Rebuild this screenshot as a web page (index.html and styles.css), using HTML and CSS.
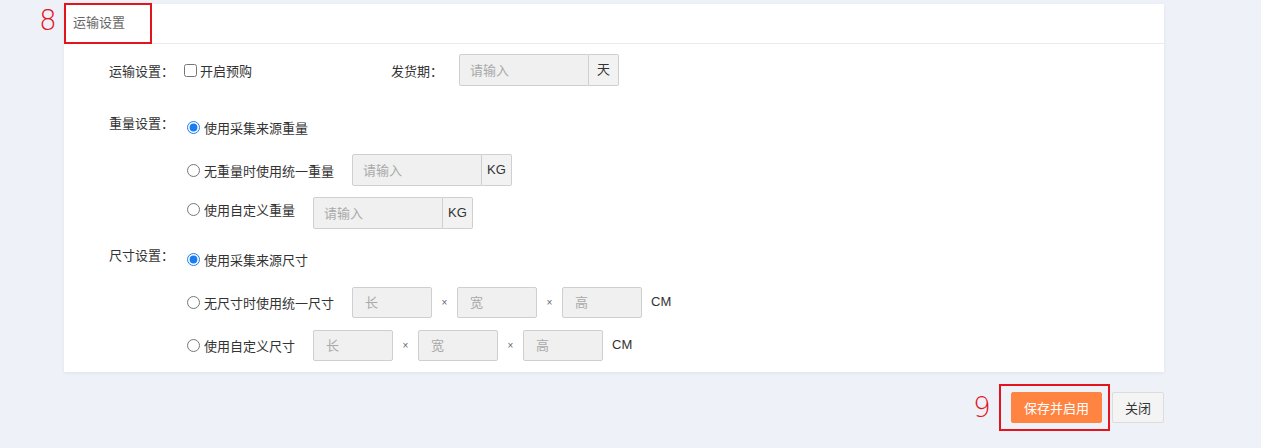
FILE: index.html
```html
<!DOCTYPE html>
<html lang="zh-CN">
<head>
    <meta charset="UTF-8">
    <meta name="viewport" content="width=device-width, initial-scale=1.0">
    <title>运输设置</title>
    <link rel="stylesheet" href="styles.css">
</head>
<body>
    <div class="page">
        <div class="card">
            <div class="card-head">运输设置</div>
            <div class="card-body">
                <div class="form-row row-ship">
                    <div class="form-item item-pre">
                        <span class="form-label">运输设置：</span>
                        <label class="check"><input type="checkbox">开启预购</label>
                    </div>
                    <div class="form-item">
                        <span class="form-label label-short">发货期：</span>
                        <div class="input-group">
                            <input class="field" type="text" placeholder="请输入">
                            <span class="addon">天</span>
                        </div>
                    </div>
                </div>

                <div class="form-row group group-weight">
                    <span class="form-label">重量设置：</span>
                    <div class="options">
                        <div class="option">
                            <label class="radio"><input type="radio" name="weight" checked>使用采集来源重量</label>
                        </div>
                        <div class="option">
                            <label class="radio"><input type="radio" name="weight">无重量时使用统一重量</label>
                            <div class="input-group">
                                <input class="field" type="text" placeholder="请输入">
                                <span class="addon">KG</span>
                            </div>
                        </div>
                        <div class="option">
                            <label class="radio raised"><input type="radio" name="weight">使用自定义重量</label>
                            <div class="input-group">
                                <input class="field" type="text" placeholder="请输入">
                                <span class="addon">KG</span>
                            </div>
                        </div>
                    </div>
                </div>

                <div class="form-row group group-size">
                    <span class="form-label">尺寸设置：</span>
                    <div class="options">
                        <div class="option">
                            <label class="radio"><input type="radio" name="size" checked>使用采集来源尺寸</label>
                        </div>
                        <div class="option">
                            <label class="radio"><input type="radio" name="size">无尺寸时使用统一尺寸</label>
                            <div class="dims">
                                <input class="field small" type="text" placeholder="长">
                                <span class="times">×</span>
                                <input class="field small" type="text" placeholder="宽">
                                <span class="times">×</span>
                                <input class="field small" type="text" placeholder="高">
                                <span class="unit">CM</span>
                            </div>
                        </div>
                        <div class="option">
                            <label class="radio"><input type="radio" name="size">使用自定义尺寸</label>
                            <div class="dims">
                                <input class="field small" type="text" placeholder="长">
                                <span class="times">×</span>
                                <input class="field small" type="text" placeholder="宽">
                                <span class="times">×</span>
                                <input class="field small" type="text" placeholder="高">
                                <span class="unit">CM</span>
                            </div>
                        </div>
                    </div>
                </div>
            </div>
        </div>

        <div class="actions">
            <button class="btn btn-primary">保存并启用</button>
            <button class="btn">关闭</button>
        </div>

        <!-- 标注 -->
        <span class="mark-num num-8">8</span>
        <span class="mark-box box-8"></span>
        <span class="mark-num num-9">9</span>
        <span class="mark-box box-9"></span>
    </div>
</body>
</html>
```

FILE: styles.css
```css
html, body {
    margin: 0;
    padding: 0;
}
body {
    font-family: "Liberation Sans", "Noto Sans CJK SC", sans-serif;
    font-size: 13px;
    color: #333;
    background-color: #eef1f8;
}
.page {
    position: relative;
    width: 1261px;
    height: 448px;
    padding: 4px 0 0 64px;
    box-sizing: border-box;
}
.card {
    width: 1100px;
    background: #fff;
    box-shadow: 0 1px 3px rgba(40, 60, 120, 0.08);
}
.card-head {
    height: 39px;
    line-height: 37px;
    padding-left: 9px;
    color: #666;
    border-bottom: 1px solid #e9e9ee;
}
.card-body {
    padding: 10px 0 11px 45px;
}
.form-row {
    display: flex;
}
.row-ship {
    align-items: center;
    height: 32px;
}
.form-item {
    display: flex;
    align-items: center;
}
.item-pre {
    width: 282px;
}
.form-label {
    width: 75px;
    flex-shrink: 0;
    color: #333;
}
.label-short {
    width: 68px;
}
.group-weight {
    margin-top: 25px;
}
.group-size {
    margin-top: 14px;
}
.group .form-label {
    line-height: 26px;
}
.options {
    display: flex;
    flex-direction: column;
    gap: 11px;
}
.option {
    display: flex;
    align-items: center;
    height: 32px;
}
.check, .radio {
    display: flex;
    align-items: center;
    color: #333;
    white-space: nowrap;
}
.check input {
    width: 13px;
    height: 13px;
    margin: 0 3px 0 0;
}
.radio input {
    width: 13px;
    height: 13px;
    margin: 0 4px 0 3px;
    accent-color: #1a7cf0;
}
.raised {
    position: relative;
    top: -4px;
}
.input-group {
    display: flex;
    margin-left: 18px;
}
.form-item .input-group {
    margin-left: 0;
}
.field {
    width: 130px;
    height: 32px;
    box-sizing: border-box;
    padding: 0 10px;
    border: 1px solid #cfcfcf;
    border-radius: 2px;
    background: #f0f0f0;
    font-family: inherit;
    font-size: 13px;
    color: #333;
    outline: none;
}
.input-group .field {
    border-radius: 2px 0 0 2px;
}
.field::placeholder {
    color: #a9a9a9;
}
.addon {
    min-width: 30px;
    height: 32px;
    box-sizing: border-box;
    padding: 0 4px;
    line-height: 30px;
    text-align: center;
    border: 1px solid #cfcfcf;
    border-left: none;
    border-radius: 0 2px 2px 0;
    background: #f2f2f2;
    color: #333;
}
.dims {
    display: flex;
    align-items: center;
    margin-left: 18px;
}
.field.small {
    width: 80px;
    height: 31px;
    padding-left: 12px;
}
.times {
    width: 25px;
    text-align: center;
    font-size: 10px;
    color: #667;
}
.unit {
    margin-left: 9px;
    color: #333;
    position: relative;
    top: -1px;
}
.actions {
    display: flex;
    justify-content: flex-end;
    gap: 10px;
    width: 1100px;
    margin-top: 20px;
}
.btn {
    height: 31px;
    padding: 0 12px;
    border: 1px solid #dcdcdc;
    border-radius: 2px;
    background: #f4f4f4;
    font-family: inherit;
    font-size: 13px;
    color: #333;
    cursor: pointer;
}
.btn-primary {
    width: 91px;
    border-color: #ff8442;
    background: #ff8442;
    color: #fff;
}
.mark-box {
    position: absolute;
    border: 2px solid #e4141e;
    box-sizing: border-box;
}
.box-8 {
    left: 64px;
    top: 3px;
    width: 88px;
    height: 41px;
}
.box-9 {
    left: 999px;
    top: 384px;
    width: 111px;
    height: 47px;
}
.mark-num {
    position: absolute;
    font-family: "DejaVu Sans", sans-serif;
    font-weight: 300;
    font-size: 28px;
    line-height: 1;
    color: #e4141e;
}
.num-8 {
    left: 39px;
    top: 7px;
}
.num-9 {
    left: 973px;
    top: 394px;
}
```
